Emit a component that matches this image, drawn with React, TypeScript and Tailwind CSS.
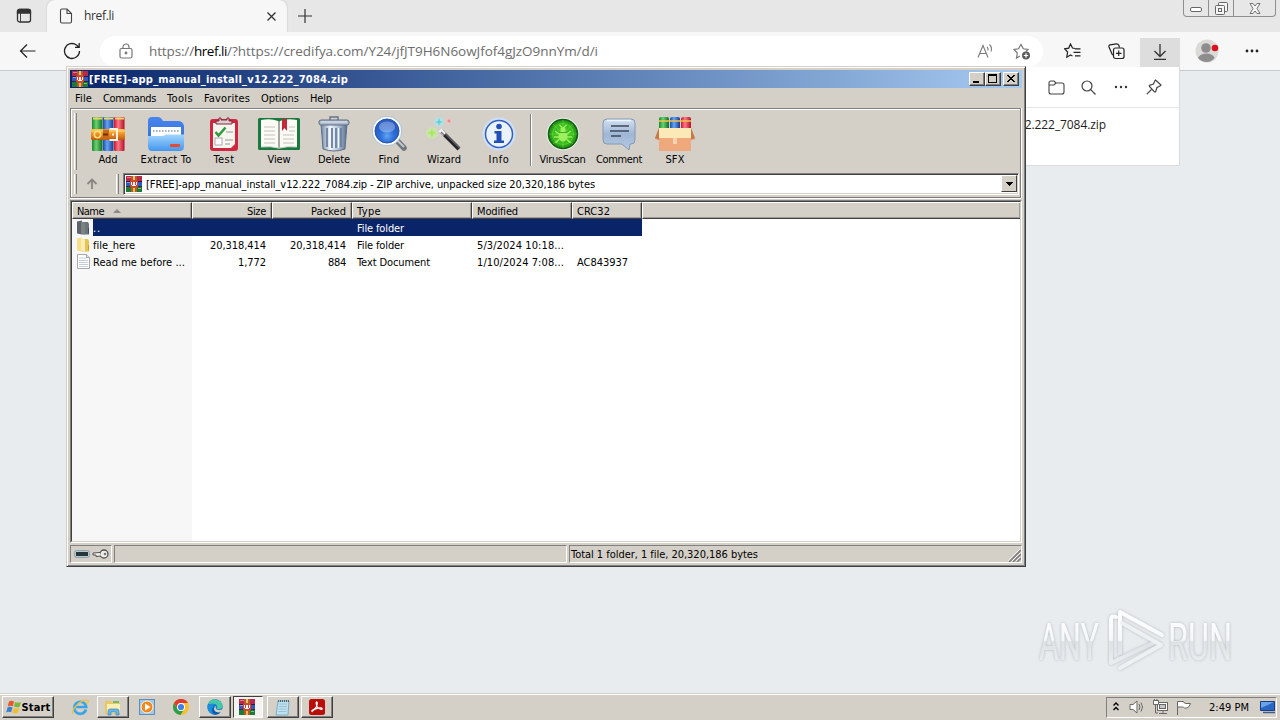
import { useLayoutEffect, useRef, useState, type ReactNode } from "react";

/* Text whose tracking is computed so that it spans exactly `w` pixels. */
function Fit({ w, className = "", children }: { w: number; className?: string; children: string }) {
  const ref = useRef<HTMLSpanElement>(null);
  const [ls, setLs] = useState(0);
  useLayoutEffect(() => {
    const el = ref.current;
    if (!el) return;
    el.style.letterSpacing = "0px";
    setLs((w - el.getBoundingClientRect().width) / children.length);
  }, [w, children]);
  return (
    <span ref={ref} className={`inline-block whitespace-pre ${className}`} style={{ letterSpacing: `${ls}px` }}>
      {children}
    </span>
  );
}

const ui = "font-['DejaVu_Sans_Condensed','DejaVu_Sans',sans-serif] [font-stretch:condensed] text-[11px] leading-[16px] text-black [&_span]:pt-[2px]";
const segoe = "font-['Open_Sans','Noto_Sans',sans-serif]";

function RarIcon({ className = "" }: { className?: string }) {
  return (
    <svg className={`shrink-0 ${className}`} viewBox="0 0 16 16" shapeRendering="crispEdges">
      <rect width="16" height="16" fill="#46202c" />
      <rect x="0" y="0" width="16" height="5" fill="#b52a4c" />
      <rect x="1" y="1" width="4" height="1" fill="#ec7690" />
      <rect x="0" y="5" width="16" height="1" fill="#3a1a2c" />
      <rect x="0" y="6" width="16" height="4" fill="#2c58c8" />
      <rect x="1" y="6" width="3" height="1" fill="#7fa3ee" />
      <rect x="0" y="11" width="16" height="5" fill="#1d7a3a" />
      <rect x="12" y="12" width="3" height="1" fill="#6dcc6a" />
      <rect x="5" y="0" width="6" height="16" fill="#b65b25" />
      <rect x="7" y="0" width="2" height="4" fill="#f0c46c" />
      <rect x="7" y="12" width="2" height="4" fill="#f0b850" />
      <rect x="4" y="5" width="8" height="6" fill="#d8402f" />
      <path d="M5 6v3h1v1h4V9h1V6h-1v3H9V6H7v3H6V6z" fill="#fff" />
    </svg>
  );
}

function AddIcon() {
  return (
    <svg width="36" height="36" viewBox="0 0 36 36">
      <defs>
        <linearGradient id="g1"><stop stopColor="#138a2b" /><stop offset=".4" stopColor="#6fd070" /><stop offset="1" stopColor="#0b6f22" /></linearGradient>
        <linearGradient id="b1"><stop stopColor="#1c49b4" /><stop offset=".4" stopColor="#67a5f0" /><stop offset="1" stopColor="#163a94" /></linearGradient>
        <linearGradient id="r1"><stop stopColor="#c9152c" /><stop offset=".4" stopColor="#ff7a86" /><stop offset="1" stopColor="#b30d24" /></linearGradient>
        <linearGradient id="o1" x2="0" y2="1"><stop stopColor="#ffc44a" /><stop offset=".5" stopColor="#ee8c24" /><stop offset="1" stopColor="#b85a0c" /></linearGradient>
      </defs>
      <rect x="2" y="1" width="10.5" height="34" rx="1" fill="url(#g1)" />
      <rect x="13" y="1" width="10.5" height="34" rx="1" fill="url(#b1)" />
      <rect x="24" y="1" width="10.5" height="34" rx="1" fill="url(#r1)" />
      <path d="M3 2.500h9M14 2.500h9M25 2.500h9" stroke="#f0d36a" strokeWidth="2" />
      <rect x="1" y="13" width="34" height="11" rx="1.500" fill="url(#o1)" />
      <path d="M1 15h34" stroke="#ffe08a" strokeOpacity=".8" />
      <circle cx="7.500" cy="18.500" r="3.200" fill="none" stroke="#ffe27a" strokeWidth="1.600" />
      <rect x="13" y="13.500" width="6" height="10" fill="#c86a18" />
      <path d="M13 18.500h5" stroke="#6a3208" strokeWidth="2" />
      <path d="M19.500 13h7.500v11h-7.500M22 18.500h2" fill="none" stroke="#fff4e4" strokeWidth="2" />
    </svg>
  );
}
function ExtractIcon() {
  return (
    <svg width="38" height="36" viewBox="0 0 38 36">
      <defs>
        <linearGradient id="f1" x2="0" y2="1"><stop stopColor="#a2d5fd" /><stop offset="1" stopColor="#4396ee" /></linearGradient>
        <linearGradient id="f2" x2="0" y2="1"><stop stopColor="#4a85ec" /><stop offset="1" stopColor="#2f6fdc" /></linearGradient>
      </defs>
      <path d="M1 5q0-4 4-4h6q3 0 5 4h15q5 0 6 5v16H1z" fill="url(#f2)" />
      <rect x="4" y="11" width="30" height="12" fill="#fff" />
      <path d="M6 15h27" stroke="#9fb0c8" strokeWidth="2" strokeDasharray="1.500 1.500" />
      <path d="M1 20h14q2 0 4-1.500h18v12q0 4.500-4.500 4.500h-27Q1 35 1 30.500z" fill="url(#f1)" />
      <rect x="23" y="28" width="10" height="3" rx="1" fill="#e24b32" />
    </svg>
  );
}
function TestIcon() {
  return (
    <svg width="30" height="36" viewBox="0 0 30 36">
      <rect x="1" y="3" width="28" height="32" rx="3" fill="#cf2740" />
      <path d="M4 7h22v21l-4 4H4z" fill="#f7f5f0" />
      <path d="M7 8V5h3V2h2v2h6V2h2v3h3v3z" fill="#d7d3d5" stroke="#8c2335" />
      <path d="M6.500 16l3 3.500 7-8" fill="none" stroke="#2f9a3c" strokeWidth="2.500" />
      <rect x="6" y="22" width="7" height="7" fill="#fff" stroke="#aaa" />
      <path d="M17 16h7M16 24h8M16 28h5" stroke="#9a9a9a" strokeWidth="1.200" />
    </svg>
  );
}
function ViewIcon() {
  return (
    <svg width="44" height="36" viewBox="0 0 44 36">
      <rect x="1" y="2" width="42" height="32" rx="1.500" fill="#19793f" />
      <path d="M4 4q10-2 17 1l1 1 1-1q7-3 17-1v27q-10-1-17 1h-2q-7-2-17-1z" fill="#fbfaf5" />
      <path d="M22 5v28" stroke="#8d8d84" strokeWidth="1.500" />
      <path d="M7 11h11M7 15h11M7 19h11M7 23h11M7 27h11M26 19h11M26 23h11M26 27h11M32 11h6M32 15h6" stroke="#c3c2bb" />
      <path d="M25 3h5v12l-2.500-3-2.500 3z" fill="#c5283a" />
      <path d="M4 31q10-1 17 1h2q7-2 17-1" stroke="#cfcfc4" fill="none" />
    </svg>
  );
}
function DeleteIcon() {
  return (
    <svg width="32" height="36" viewBox="0 0 32 36">
      <defs><linearGradient id="t1"><stop stopColor="#6f88a8" /><stop offset=".35" stopColor="#f0f5fa" /><stop offset=".7" stopColor="#a9bad0" /><stop offset="1" stopColor="#566d8d" /></linearGradient></defs>
      <path d="M12 4V1h8v3" fill="none" stroke="#66748a" strokeWidth="1.400" />
      <path d="M3 8h26l-2 25q-11 4-22 0z" fill="url(#t1)" stroke="#5d6f8a" />
      <path d="M9 12v19M14 12v20M18 12v20M23 12v19" stroke="#6b80a0" strokeWidth="1.800" />
      <path d="M11.500 12v20M16 12v20M20.500 12v20" stroke="#f2f7fc" />
      <rect x="1" y="4" width="30" height="5" rx="2" fill="#aab8cb" stroke="#5e6c82" />
      <path d="M3 6h26" stroke="#e8eef5" />
    </svg>
  );
}
function FindIcon() {
  return (
    <svg width="36" height="36" viewBox="0 0 36 36">
      <defs><radialGradient id="m1" cx=".5" cy=".7"><stop stopColor="#5fa6f2" /><stop offset=".55" stopColor="#2f70da" /><stop offset="1" stopColor="#2a5ec4" /></radialGradient></defs>
      <path d="M26 24.500l7 7.500" stroke="#70767e" strokeWidth="5.500" strokeLinecap="round" />
      <path d="M26 24l7 7" stroke="#c3c8cf" strokeWidth="2" />
      <circle cx="16" cy="15" r="14.800" fill="#f6faff" stroke="#9fb4cd" strokeWidth=".8" />
      <circle cx="16" cy="15" r="12" fill="url(#m1)" stroke="#27539f" />
      <ellipse cx="16" cy="11" rx="8" ry="5.500" fill="#fff" opacity=".3" />
    </svg>
  );
}
function WizardIcon() {
  return (
    <svg width="38" height="36" viewBox="0 0 38 36">
      <circle cx="7" cy="17" r="6" fill="#c5ee9b" opacity=".6" />
      <circle cx="14" cy="6" r="5" fill="#a8e8ee" opacity=".6" />
      <circle cx="24" cy="5" r="3" fill="#f5bfc0" opacity=".6" />
      <path d="M7 12.500l1.200 3.300L11.500 17l-3.300 1.200L7 21.500l-1.200-3.300L2.500 17l3.300-1.200z" fill="#a4ea5c" />
      <path d="M14 2l1 3 3 1-3 1-1 3-1-3-3-1 3-1z" fill="#5ad3df" />
      <path d="M24 3l.7 1.300L26 5l-1.300.7L24 7l-.7-1.300L22 5l1.300-.7z" fill="#f07f84" />
      <path d="M16 15l18 18" stroke="#26262a" strokeWidth="4" />
      <path d="M17 14.500l17.500 17.500" stroke="#8c8c92" strokeWidth="1" />
      <path d="M15 14l4.500 4.500" stroke="#f1f1f3" strokeWidth="4" />
      <path d="M16 16l3 3" stroke="#77777d" strokeWidth="1.500" />
    </svg>
  );
}
function InfoIcon() {
  return (
    <svg width="34" height="36" viewBox="0 0 34 36">
      <circle cx="17" cy="18" r="16.500" fill="#cfdef7" />
      <circle cx="17" cy="18" r="13.500" fill="#eaf2fd" stroke="#3160bf" strokeWidth="1.500" />
      <circle cx="17" cy="10.500" r="2.800" fill="#2250b5" />
      <path d="M12.500 15h7v9.500h2.500V27H12v-2.500h2.500V17.500h-2z" fill="#2250b5" />
    </svg>
  );
}
function VirusIcon() {
  return (
    <svg width="34" height="36" viewBox="0 0 34 36">
      <defs><radialGradient id="v1"><stop stopColor="#57c832" /><stop offset=".7" stopColor="#34b91a" /><stop offset="1" stopColor="#1f8a14" /></radialGradient></defs>
      <circle cx="17" cy="18" r="16.300" fill="#e9f2e5" />
      <circle cx="17" cy="18" r="14.500" fill="url(#v1)" stroke="#155d18" strokeWidth="1.600" />
      <path d="M17 4v28M3 18h28M7 8l20 20M27 8L7 28" stroke="#8ff060" strokeWidth=".7" opacity=".5" />
      <circle cx="17" cy="18" r="10.500" fill="none" stroke="#8ff060" strokeWidth=".6" opacity=".6" />
      <ellipse cx="17" cy="20" rx="4.500" ry="5.500" fill="#9cf05e" />
      <circle cx="17" cy="13.500" r="2.600" fill="#9cf05e" />
      <path d="M13 18l-4-3M21 18l4-3M13 21H8M21 21h5M13.500 23l-4 4M20.500 23l4 4M16 11.500L13.500 9M18 11.500L20.500 9" stroke="#9cf05e" strokeWidth="1.300" />
      <path d="M13 16.500h8" stroke="#2b9a1c" strokeWidth=".8" />
    </svg>
  );
}
function CommentIcon() {
  return (
    <svg width="34" height="36" viewBox="0 0 34 36">
      <defs><linearGradient id="c1" x2="0" y2="1"><stop stopColor="#d3e1f2" /><stop offset=".5" stopColor="#9fb6d4" /><stop offset="1" stopColor="#b7cae3" /></linearGradient></defs>
      <path d="M5 3h24a4 4 0 0 1 4 4v17a4 4 0 0 1-4 4h-1l-1 6-7-6H5a4 4 0 0 1-4-4V7a4 4 0 0 1 4-4z" fill="url(#c1)" stroke="#8399b6" />
      <path d="M5 4.500h24" stroke="#f1f6fc" strokeWidth="1.400" />
      <path d="M9 10h18M8 15h19M9 20h10" stroke="#3c4a5e" strokeWidth="1.600" />
    </svg>
  );
}
function SfxIcon() {
  return (
    <svg width="42" height="36" viewBox="0 0 42 36">
      <rect x="5" y="1" width="10" height="14" rx="2" fill="url(#g1)" />
      <rect x="16" y="1" width="10" height="14" rx="2" fill="url(#b1)" />
      <rect x="27" y="1" width="10" height="14" rx="2" fill="url(#r1)" />
      <path d="M5 5h32" stroke="#f0c64e" strokeWidth="1.500" />
      <path d="M5 12h32l4 11-4 1v11H5V24l-4-1z" fill="#d98b5c" />
      <path d="M5 12h32v10H5z" fill="#fbeab8" />
      <path d="M5 22h32v13H5z" fill="#efa87c" />
      <path d="M5 12v11l-4-1zM37 12v11l4-1z" fill="#c47a4c" />
      <path d="M19 22h4v6h-4z" fill="#f8d3b2" />
    </svg>
  );
}

function ToolButton({ icon, label, w, className }: { icon: ReactNode; label: string; w: number; className: string }) {
  return (
    <div className={`flex shrink-0 flex-col items-center ${className}`}>
      <div className="-mb-[2px] flex h-[36px] items-center">{icon}</div>
      <Fit w={w}>{label}</Fit>
    </div>
  );
}

const Grip = ({ className }: { className: string }) => (
  <div className={`w-[3px] shrink-0 border-r border-l border-r-[#808080] border-l-white bg-[#d4d0c8] ${className}`} />
);

function CaptionButton({ children, className = "" }: { children: ReactNode; className?: string }) {
  return (
    <div className={`flex h-[14px] w-4 items-center justify-center border border-t-white border-r-[#404040] border-b-[#404040] border-l-white bg-[#d4d0c8] shadow-[inset_-1px_-1px_0_#808080] ${className}`}>
      <svg width="12" height="10" viewBox="0 0 12 10" shapeRendering="crispEdges">{children}</svg>
    </div>
  );
}

function HeadCell({ children, className }: { children?: ReactNode; className: string }) {
  return (
    <div className={`flex h-[17px] shrink-0 items-center border border-t-white border-r-[#404040] border-b-[#404040] border-l-white bg-[#d4d0c8] pr-[5px] pl-[4px] shadow-[inset_-1px_-1px_0_#a09c95] ${className}`}>
      {children}
    </div>
  );
}

function FolderIcon({ dark = false }: { dark?: boolean }) {
  return (
    <svg width="16" height="16" viewBox="0 0 16 16" className="shrink-0">
      <path d="M1 1.500l5-1v14l-5-1z" fill={dark ? "#5c6468" : "#f5df8c"} />
      <path d="M6 2h6l1 2v10.500H6z" fill={dark ? "#6b7478" : "#e6c456"} />
      <path d="M5 1.500l4 1v12l-4-1z" fill={dark ? "#7b8284" : "#fbeeb4"} />
      <path d="M12 8h1v5l-1 1z" fill={dark ? "#3c4870" : "#c99e2d"} />
    </svg>
  );
}
function DocIcon() {
  return (
    <svg width="16" height="16" viewBox="0 0 16 16" className="shrink-0">
      <path d="M1.500.5h9l3 3v11h-12z" fill="#fff" stroke="#a3a9ae" />
      <path d="M3 4h8M3 6.500h9M3 8.500h9M3 10.500h9M3 12.500h9" stroke="#b8c3cd" strokeWidth=".8" />
      <path d="M10.500.5v3h3" fill="#dde6ee" stroke="#a3a9ae" />
    </svg>
  );
}

type Row = { icon: ReactNode; name: [string, number]; size?: [string, number]; packed?: [string, number]; type: [string, number]; mod?: [string, number]; crc?: [string, number]; sel?: boolean };
const rows: Row[] = [
  { icon: <FolderIcon dark />, name: ["..", 8], type: ["File folder", 47], sel: true },
  { icon: <FolderIcon />, name: ["file_here", 42], size: ["20,318,414", 56], packed: ["20,318,414", 56], type: ["File folder", 47], mod: ["5/3/2024 10:18...", 87] },
  { icon: <DocIcon />, name: ["Read me before ...", 92], size: ["1,772", 28], packed: ["884", 18], type: ["Text Document", 73], mod: ["1/10/2024 7:08...", 87], crc: ["AC843937", 51] },
];
const cell = (c?: [string, number]) => (c ? <Fit w={c[1]}>{c[0]}</Fit> : null);

function Window() {
  return (
    <div className={`absolute top-[66px] left-[66px] flex h-[501px] w-[960px] flex-col border border-t-[#d4d0c8] border-r-[#404040] border-b-[#404040] border-l-[#d4d0c8] bg-[#d4d0c8] p-[3px] shadow-[inset_1px_1px_0_#fff,inset_-1px_-1px_0_#808080] ${ui}`}>
      <div className="flex h-[18px] shrink-0 items-center bg-linear-to-r from-[#0a246a] to-[#a6caf0] pr-[3px] pl-[2px]">
        <RarIcon className="h-4 w-4" />
        <Fit w={259} className="ml-[1px] font-bold text-white">[FREE]-app_manual_install_v12.222_7084.zip</Fit>
        <div className="ml-auto flex">
          <CaptionButton><path d="M2 7h6v2H2z" /></CaptionButton>
          <CaptionButton><path d="M1 0h9v9H1zM2 2v6h7V2z" fillRule="evenodd" /></CaptionButton>
          <CaptionButton className="ml-[2px]"><path d="M2 1h2v1h1v1h2V2h1V1h2v1H9v1H8v1H7v1h1v1h1v1h1v1H8V7H7V6H5v1H4v1H2V7h1V6h1V5h1V4H4V3H3V2H2z" /></CaptionButton>
        </div>
      </div>
      <div className="flex h-5 shrink-0 items-center pl-[5px]">
        <Fit w={17}>File</Fit>
        <Fit w={53} className="ml-[11px]">Commands</Fit>
        <Fit w={26} className="ml-[11px]">Tools</Fit>
        <Fit w={46} className="ml-[11px]">Favorites</Fit>
        <Fit w={38} className="ml-[11px]">Options</Fit>
        <Fit w={22} className="ml-[11px]">Help</Fit>
      </div>
      <div className="flex h-[90px] w-[951px] shrink-0 flex-col border border-[#808080] shadow-[inset_1px_1px_0_#fff,0_1px_0_#fff,1px_0_0_#fff]">
        <div className="flex h-[63px] pt-[7px] pl-[3px]">
          <Grip className="mt-[-3px] h-[57px]" />
          <div className="ml-[3px] flex">
            <ToolButton className="w-14" icon={<AddIcon />} label="Add" w={19} />
            <ToolButton className="w-15" icon={<ExtractIcon />} label="Extract To" w={51} />
            <ToolButton className="w-14" icon={<TestIcon />} label="Test" w={21} />
            <ToolButton className="w-[54px]" icon={<ViewIcon />} label="View" w={23} />
            <ToolButton className="w-14" icon={<DeleteIcon />} label="Delete" w={32} />
            <ToolButton className="w-[54px]" icon={<FindIcon />} label="Find" w={21} />
            <ToolButton className="w-14" icon={<WizardIcon />} label="Wizard" w={34} />
            <ToolButton className="w-[54px]" icon={<InfoIcon />} label="Info" w={21} />
            <div className="mt-[-2px] mr-[3px] ml-[4px] h-[52px] w-[2px] border-r border-l border-r-white border-l-[#808080]" />
            <ToolButton className="w-[55px]" icon={<VirusIcon />} label="VirusScan" w={46} />
            <ToolButton className="w-[58px]" icon={<CommentIcon />} label="Comment" w={46} />
            <ToolButton className="w-[54px]" icon={<SfxIcon />} label="SFX" w={19} />
          </div>
        </div>
        <div className="flex h-[22px] items-center pt-px pl-[3px]">
          <Grip className="h-[20px]" />
          <div className="flex w-[39px] justify-center pr-[10px]">
            <svg width="12" height="12" viewBox="0 0 12 12" fill="none" stroke="#8a867f" strokeWidth="1.800"><path d="M6 11V1.500M1.500 6L6 1.500 10.500 6" /></svg>
          </div>
          <Grip className="h-[20px]" />
          <div className="ml-[4px] flex h-[22px] w-[896px] items-center border border-t-[#808080] border-r-white border-b-white border-l-[#808080] bg-white p-px pl-[2px] shadow-[inset_1px_1px_0_#404040,inset_-1px_-1px_0_#d4d0c8]">
            <RarIcon className="h-4 w-4" />
            <Fit w={449} className="ml-[4px]">[FREE]-app_manual_install_v12.222_7084.zip - ZIP archive, unpacked size 20,320,186 bytes</Fit>
            <div className="ml-auto flex h-[17px] w-4 items-center justify-center border border-t-white border-r-[#404040] border-b-[#404040] border-l-white bg-[#d4d0c8]">
              <svg width="7" height="4" viewBox="0 0 7 4" shapeRendering="crispEdges"><path d="M0 0h7v1H6v1H5v1H4v1H3V3H2V2H1V1H0z" /></svg>
            </div>
          </div>
        </div>
      </div>
      <div className="mt-[2px] flex h-[343px] shrink-0 flex-col border border-t-[#808080] border-r-white border-b-white border-l-[#808080]">
        <div className="flex grow flex-col border border-t-[#404040] border-r-[#d4d0c8] border-b-[#d4d0c8] border-l-[#404040] bg-white">
          <div className="flex shrink-0">
            <HeadCell className="w-[120px]">
              <Fit w={27}>Name</Fit>
              <svg width="8" height="4" viewBox="0 0 8 4" className="ml-[9px]"><path d="M0 4l4-4 4 4z" fill="#8d8a84" /></svg>
            </HeadCell>
            <HeadCell className="w-20 justify-end"><Fit w={19}>Size</Fit></HeadCell>
            <HeadCell className="w-20 justify-end"><Fit w={35}>Packed</Fit></HeadCell>
            <HeadCell className="w-[120px]"><Fit w={24}>Type</Fit></HeadCell>
            <HeadCell className="w-[100px]"><Fit w={41}>Modified</Fit></HeadCell>
            <HeadCell className="w-[70px]"><Fit w={33}>CRC32</Fit></HeadCell>
            <HeadCell className="w-[378px] border-r-0" />
          </div>
          <div className="flex grow flex-col bg-linear-to-r from-[#f7f7f7] from-[120px] to-white to-[120px]">
            {rows.map((r) => (
              <div key={r.name[0]} className={`flex h-[17px] w-[570px] items-center ${r.sel ? "text-white" : ""}`}>
                <div className="flex w-[21px] shrink-0 justify-end pr-px pl-1">{r.icon}</div>
                <div className={`flex h-[17px] grow items-center ${r.sel ? "bg-[#0a246a]" : ""}`}>
                  <div className="flex w-[99px] shrink-0">{cell(r.name)}</div>
                  <div className="flex w-20 shrink-0 justify-end pr-[6px]">{cell(r.size)}</div>
                  <div className="flex w-20 shrink-0 justify-end pr-[6px]">{cell(r.packed)}</div>
                  <div className="flex w-[120px] shrink-0 pl-[5px]">{cell(r.type)}</div>
                  <div className="flex w-[100px] shrink-0 pl-[5px]">{cell(r.mod)}</div>
                  <div className="flex w-[70px] shrink-0 pl-[5px]">{cell(r.crc)}</div>
                </div>
              </div>
            ))}
          </div>
        </div>
      </div>
      <div className="mt-[2px] flex h-[18px] shrink-0 gap-[2px]">
        <div className="flex w-[42px] items-center border border-t-[#808080] border-r-white border-b-white border-l-[#808080] pl-[3px]">
          <svg width="36" height="12" viewBox="0 0 36 12">
            <rect x=".5" y="2.500" width="15" height="7" rx="2" fill="#b7c9cd" stroke="#8fa4a8" />
            <rect x="2" y="4" width="12" height="4" fill="#26363a" />
            <circle cx="30" cy="6" r="4" fill="#eee" stroke="#55524d" strokeWidth="1.300" />
            <circle cx="31" cy="6" r="1.300" fill="#777" />
            <path d="M26 4.500l-7 .5v2h3v1.500l5-.500" fill="#eee" stroke="#55524d" />
          </svg>
        </div>
        <div className="w-[453px] border border-t-[#808080] border-r-white border-b-white border-l-[#808080]" />
        <div className="flex grow items-center justify-between border border-t-[#808080] border-r-white border-b-white border-l-[#808080] pl-[1px]">
          <Fit w={187}>Total 1 folder, 1 file, 20,320,186 bytes</Fit>
          <svg width="13" height="13" viewBox="0 0 13 13" className="self-end"><path d="M1 13L13 1M5 13l8-8M9 13l4-4" stroke="#808080" strokeWidth="1.600" /><path d="M0 12L12 0M4 12l8-8M8 12l4-4" stroke="#fff" strokeWidth=".8" /></svg>
        </div>
      </div>
    </div>
  );
}

function Browser() {
  return (
    <div className={`flex shrink-0 flex-col ${segoe}`}>
      <div className="flex h-8 bg-[#e7e7e7]">
        <div className="flex w-[47px] items-center pl-[16px]">
          <svg width="16" height="16" viewBox="0 0 16 16" fill="none" stroke="#333" strokeWidth="1.300"><rect x="1.500" y="1.500" width="13" height="12.500" rx="2" /><path d="M1.500 3.500q0-2 2-2h9q2 0 2 2V5h-13z" fill="#333" /><path d="M4.500 5v9" strokeWidth=".9" /></svg>
        </div>
        <div className="flex w-[240px] items-center rounded-t-lg bg-[#f7f7f7] pl-3 shadow-[0_0_2px_#bbb]">
          <svg width="14" height="16" viewBox="0 0 14 16" fill="none" stroke="#444" strokeWidth="1.100"><path d="M1.500 2.500q0-1.500 1.500-1.500h5l4.500 4.500V13.500q0 1.500-1.500 1.500H3q-1.500 0-1.500-1.500zM8 1v4.500h4.500" /></svg>
          <Fit w={30} className="ml-[11px] text-[12px] leading-4 text-[#333]">href.li</Fit>
          <svg width="9" height="9" viewBox="0 0 9 9" className="ml-[153px]" stroke="#333" strokeWidth="1.300"><path d="M.5.5l8 8M8.500.5l-8 8" /></svg>
        </div>
        <div className="flex items-center pl-[11px]">
          <svg width="14" height="14" viewBox="0 0 14 14" stroke="#333" strokeWidth="1.200"><path d="M7 0v14M0 7h14" /></svg>
        </div>
        <div className="mr-[4px] ml-auto flex h-[17px] rounded-b-[4px] border border-t-0 border-[#8f8f8f] text-[#777]">
          <div className="flex w-[25px] items-center justify-center border-r border-[#8f8f8f] pt-[3px]">
            <svg width="12" height="5" viewBox="0 0 12 5" fill="#fff" stroke="#666"><rect x=".5" y=".5" width="11" height="4" rx="1.500" /></svg>
          </div>
          <div className="flex w-[25px] items-center justify-center border-r border-[#8f8f8f]">
            <svg width="13" height="13" viewBox="0 0 13 13" fill="#f4f4f4" stroke="#666"><rect x="3.500" y=".5" width="9" height="9" rx="1" /><rect x=".5" y="3.500" width="9" height="9" rx="1" /><rect x="3.500" y="6.500" width="3" height="3" /></svg>
          </div>
          <div className="flex w-[41px] items-center justify-center">
            <svg width="12" height="11" viewBox="0 0 12 11" fill="#f4f4f4" stroke="#666" strokeWidth=".9"><path d="M1 .5h3l2 2.500 2-2.500h3L8 5.500l3 5H8L6 8l-2 2.500H1l3-5z" /></svg>
          </div>
        </div>
      </div>
      <div className="flex h-[39px] items-center border-b border-[#c9c9c9] bg-[#f7f7f7]">
        <svg width="17" height="14" viewBox="0 0 17 14" className="ml-[19px]" fill="none" stroke="#222" strokeWidth="1.200"><path d="M16.500 7H1.500M8 .5L1.500 7 8 13.500" /></svg>
        <svg width="18" height="18" viewBox="0 0 18 18" className="ml-[27px]" fill="none" stroke="#222" strokeWidth="1.300"><path d="M16.500 9A7.500 7.500 0 1 1 13.500 3l2.500 2.200M16.200 1v4.300H12" /></svg>
        <div className="ml-[19px] flex h-[31px] w-[943px] items-center rounded-full bg-white pl-[19px]">
          <svg width="14" height="16" viewBox="0 0 14 16" fill="none" stroke="#777" strokeWidth="1.200"><rect x="1" y="5.500" width="12" height="9.500" rx="1.500" /><path d="M4 5.500V4a3 3 0 0 1 6 0v1.500" /><circle cx="7" cy="10" r=".8" fill="#777" /></svg>
          <div className="ml-[16px] flex text-[13.5px] leading-5 text-[#6d6d6d]">
            <Fit w={45}>https://</Fit>
            <Fit w={33} className="text-black">href.li</Fit>
            <Fit w={371}>/?https://credifya.com/Y24/jfJT9H6N6owJfof4gJzO9nnYm/d/i</Fit>
          </div>
          <svg width="17" height="16" viewBox="0 0 17 16" className="ml-[379px]" fill="none" stroke="#7a7a7a" strokeWidth="1.100"><path d="M1 14.500L6 2.500l5 12M2.800 10.500h6.400M10 4q1.500 1.300 1 3.500M12.500 1.500q3 3 1.500 7" /></svg>
          <svg width="18" height="17" viewBox="0 0 18 17" className="ml-[19px]" fill="none" stroke="#777" strokeWidth="1.200"><path d="M7 13l-3.500 2 .8-5L1 6.500l4.500-.7L8 1.500l2.300 4.300 4.700.7-2 2" /><circle cx="13" cy="12.500" r="4" fill="#5c5c5c" stroke="none" /><path d="M10.800 12.500h4.400M13 10.300v4.400" stroke="#fff" /></svg>
        </div>
        <svg width="17" height="16" viewBox="0 0 17 16" className="ml-[21px]" fill="none" stroke="#222" strokeWidth="1.200"><path d="M11 5.500L8.500 5 6.500 1 4.700 5.100.7 5.800 3.600 9l-.8 5.200L6.500 12l2 1M11 5.800h5.500M9.500 9.300h7M11 12.800h5.500" /></svg>
        <svg width="17" height="17" viewBox="0 0 17 17" className="ml-[27px]" fill="none" stroke="#222" strokeWidth="1.200"><path d="M5 12q-1-.5-1.300-1.700L1 4q-.4-1.600 1-2.200L8.500.8Q10 .7 10.700 2l.8 2.500" /><rect x="5.500" y="5" width="10.500" height="10.500" rx="2" fill="#f7f7f7" /><path d="M10.700 7.500v5.500M8 10.300h5.500" /></svg>
        <div className="ml-[15px] flex h-8 w-10 items-center justify-center self-end bg-[#dddddd] pb-[4px]">
          <svg width="12" height="16" viewBox="0 0 12 16" fill="none" stroke="#333" strokeWidth="1.300"><path d="M6 0v12M.5 7L6 12.500 11.500 7M0 15.300h12" /></svg>
        </div>
        <svg width="24" height="24" viewBox="0 0 24 24" className="ml-[15px]"><circle cx="12" cy="12" r="11.500" fill="#dcdad7" /><circle cx="11" cy="9" r="4.800" fill="#8d8d8d" /><path d="M3 19q2-4.500 8.500-4.500T19.500 19q-3 4-8 4T3 19z" fill="#8d8d8d" /><circle cx="20" cy="9" r="3.300" fill="#d8121f" /></svg>
        <svg width="14" height="4" viewBox="0 0 14 4" className="ml-[26px]" fill="#222"><circle cx="2" cy="2" r="1.400" /><circle cx="7" cy="2" r="1.400" /><circle cx="12" cy="2" r="1.400" /></svg>
      </div>
    </div>
  );
}

function Downloads() {
  return (
    <div className={`absolute top-[67px] left-[1000px] flex h-[99px] w-[180px] flex-col border border-t-0 border-[#d9dbdd] bg-white ${segoe}`}>
      <div className="flex h-[41px] items-center border-b border-[#e6e6e6] pl-[47px]">
        <svg width="17" height="15" viewBox="0 0 17 15" fill="none" stroke="#444" strokeWidth="1.100"><path d="M1 3q0-2 2-2h3l2 2h6q2 0 2 2v7q0 2-2 2H3q-2 0-2-2zM1 5h5l2-2" /></svg>
        <svg width="15" height="15" viewBox="0 0 15 15" className="ml-[16px]" fill="none" stroke="#444" strokeWidth="1.200"><circle cx="6" cy="6" r="5" /><path d="M9.700 9.700L14.500 14.500" /></svg>
        <svg width="14" height="4" viewBox="0 0 14 4" className="ml-[18px]" fill="#333"><circle cx="2" cy="2" r="1.200" /><circle cx="7" cy="2" r="1.200" /><circle cx="12" cy="2" r="1.200" /></svg>
        <svg width="16" height="16" viewBox="0 0 16 16" className="ml-[18px]" fill="none" stroke="#444" strokeWidth="1.200"><path d="M9.500 1l5.500 5-1 1-3 1.500-1.500 4.500h-1L3.500 7.500 3.300 6.500 7.500 5 9 1.500zM6 10L.8 15.200" /></svg>
      </div>
      <div className="flex justify-end pt-[7px] pr-[73px]">
        <Fit w={94} className="text-[12px] leading-5 text-[#222]">v12.222_7084.zip</Fit>
      </div>
    </div>
  );
}

function Watermark() {
  return (
    <svg width="212" height="82" viewBox="-6 -6 212 82" className="absolute top-[600px] left-[1030px] overflow-visible">
      <defs>
        <linearGradient id="w" gradientUnits="userSpaceOnUse" x1="0" x2="0" y1="16" y2="54"><stop stopColor="#fafcfd" /><stop offset=".48" stopColor="#f5f7f8" /><stop offset=".52" stopColor="#dfe2e5" /><stop offset="1" stopColor="#e9ecee" /></linearGradient>
        <filter id="s" x="-10%" y="-20%" width="120%" height="140%"><feDropShadow dx="0" dy="0" stdDeviation="1.500" floodColor="#8d9398" floodOpacity=".6" /></filter>
      </defs>
      <g filter="url(#s)" fill="url(#w)">
        <text x="3" y="54" fontSize="52" fontFamily="Roboto, sans-serif" textLength="60" lengthAdjust="spacingAndGlyphs">ANY</text>
        <text x="132" y="54" fontSize="52" fontFamily="Roboto, sans-serif" textLength="64" lengthAdjust="spacingAndGlyphs">RUN</text>
        <g fill="none" stroke="url(#w)" strokeWidth="4" strokeLinejoin="round" strokeLinecap="round">
          <path d="M80 11q-5-2-5 3V57L119 36" />
          <path d="M84 47V6L126 29" />
          <path d="M84 62L125 39 86 17" stroke="#eef1f3" />
        </g>
      </g>
    </svg>
  );
}

function Task({ children, raised, pressed, className }: { children: ReactNode; raised?: boolean; pressed?: boolean; className: string }) {
  const edge = pressed
    ? "border border-t-[#404040] border-l-[#404040] border-r-white border-b-white bg-[#f4f2ee]"
    : raised
      ? "border border-t-white border-l-white border-r-[#404040] border-b-[#404040] shadow-[inset_-1px_-1px_0_#808080]"
      : "";
  return <div className={`flex h-[22px] shrink-0 items-center justify-center ${edge} ${className}`}>{children}</div>;
}

function Taskbar() {
  return (
    <div className={`flex h-[27px] shrink-0 items-center border-t border-[#d4d0c8] bg-[#d4d0c8] pl-[2px] shadow-[inset_0_1px_0_#fff] ${ui}`}>
      <Task raised className="w-[52px]">
        <svg width="16" height="16" viewBox="0 0 16 16"><path d="M3 2.500q2.500-1.500 5 0L6.800 7.200q-2.500-1.200-5 .2z" fill="#e8562c" /><path d="M9 3q2.500 1.300 6 0l-1.500 4.700q-3 1.200-5.500-.2z" fill="#7ab83a" /><path d="M1.500 8.600q2.500-1.500 5 0l-1.300 4.700q-2.300-1.300-5 .1z" fill="#3c7fd0" /><path d="M7.700 9q2.500 1.300 5.500.1l-1.300 4.700q-3 1.200-5.500-.2z" fill="#f4bd2c" /></svg>
        <Fit w={29} className="font-bold">Start</Fit>
      </Task>
      <Task className="ml-[11px] w-[30px]">
        <svg width="18" height="18" viewBox="0 0 18 18" fill="none"><path d="M15 11.500A6 6 0 1 1 15.200 9H5" stroke="#3ba4e6" strokeWidth="2.700" /><path d="M2 16q-2-3 4-9T17 2.500q1 1-1.500 3.500" stroke="#efc040" strokeWidth="1.300" /></svg>
      </Task>
      <Task raised className="ml-[2px] w-[32px]">
        <svg width="18" height="17" viewBox="0 0 18 17"><path d="M1 2h6l1 2h8v11H1z" fill="#e9c863" /><path d="M3 5h13v9H3z" fill="#fbefb4" /><path d="M4 16v-4q0-2 2-2h7q2 0 2 2v4h-3v-3H7v3z" fill="#69b4e6" stroke="#3f87bd" strokeWidth=".7" /><path d="M9 2h6v2H9z" fill="#6dbb6b" /></svg>
      </Task>
      <Task className="ml-[3px] w-[30px]">
        <svg width="16" height="16" viewBox="0 0 16 16"><rect x=".5" y=".5" width="15" height="15" fill="#9fc7ea" stroke="#5b8fc0" /><circle cx="8" cy="8" r="6" fill="#f18a1d" stroke="#fff3dd" /><path d="M6 4.500L11.500 8 6 11.500z" fill="#fff" /></svg>
      </Task>
      <Task className="ml-[4px] w-[30px]">
        <svg width="16" height="16" viewBox="0 0 16 16"><circle cx="8" cy="8" r="8" fill="#f6c12c" /><path d="M1 4.100A8 8 0 0 1 15 4H8a4 4 0 0 0-3.500 6z" fill="#dd3d31" /><path d="M1 4.100A8 8 0 0 0 7.500 16L11 10.500A4 4 0 0 1 4.500 10z" fill="#2f9d4e" /><circle cx="8" cy="8" r="4" fill="#fff" /><circle cx="8" cy="8" r="3.100" fill="#3f7fe8" /></svg>
      </Task>
      <Task raised className="ml-[3px] w-[32px]">
        <svg width="16" height="16" viewBox="0 0 16 16"><circle cx="8" cy="8" r="7.700" fill="#1673c7" /><path d="M1 5Q4-1 10 .7q6 2 5.600 7-1 3-4.600 2.500-2-.5-1-2Q10 4.500 6 5 3 5.300 1 5z" fill="#46c9a8" /><path d="M.7 6Q4 3.500 8 5q-3 2-2 5.500Q8 15 13 13q-2 3-6 2.700Q0 14 .7 6z" fill="#1b8fdf" /><path d="M9 7q-1.500 3 2.500 4 2.500.3 4.500-1.200v5L11 14Q7 13 7 9.500q.5-2.500 2-2.500z" fill="#d4d0c8" /><path d="M6.500 8q-.5 5 5 5.500 1.500 0 2.500-.8-2 3-6 2.800Q5 14 5 11q0-2 1.500-3z" fill="#0c59a8" /></svg>
      </Task>
      <Task pressed className="ml-[2px] w-[30px] pr-[2px]"><RarIcon className="h-4 w-4" /></Task>
      <Task raised className="ml-[4px] w-[32px]">
        <svg width="16" height="17" viewBox="0 0 16 17"><path d="M3 2h11l-1 14H1z" fill="#bfe0ee" stroke="#6ba1ba" strokeWidth=".8" /><path d="M4 5h8M4 7.500h8M3.500 10h8M3.500 12.500h8" stroke="#8fbdd1" strokeWidth=".8" /><path d="M3 2h11" stroke="#4c6470" strokeWidth="2" strokeDasharray="1 1" /></svg>
      </Task>
      <Task raised className="ml-[2px] w-[32px]">
        <svg width="16" height="16" viewBox="0 0 16 16"><rect width="16" height="16" rx="2.500" fill="#b80f0a" /><path d="M3 12.500q-.8-1 2-2.300Q8 8.500 8.300 4q-.5-2-1.200-.3Q7 7 9.500 9.200q3.500 2 3.700.6-.2-1.500-4.200-.6-4.500 1-6 3.300z" fill="none" stroke="#fff" strokeWidth="1.200" /></svg>
      </Task>
      <div className="mr-[3px] ml-auto flex h-[21px] w-[171px] items-center border border-t-[#808080] border-r-white border-b-white border-l-[#808080]">
        <svg width="6" height="9" viewBox="0 0 6 9" className="mb-[2px] ml-[6px]" fill="none" stroke="#000" strokeWidth="1.400"><path d="M.5 3.500L3 1l2.500 2.500M.5 8L3 5.500 5.500 8" /></svg>
        <svg width="16" height="14" viewBox="0 0 16 14" className="ml-[10px]" fill="#fff" stroke="#6b6965"><path d="M1 4.500h3L8 1v12L4 9.500H1z" /><path d="M10 4q2 3 0 6M12 2.500q3 4.500 0 9" fill="none" /></svg>
        <svg width="17" height="16" viewBox="0 0 17 16" className="ml-[7px]" fill="#fff" stroke="#6a6864"><rect x="5.500" y="3.500" width="10" height="8" /><rect x="7.500" y="5.500" width="6" height="4" fill="#c4c8ca" /><path d="M7 14.500h8M11 12v2M3.500 6v8H6" fill="none" /><path d="M1.500 1.500h5v4h-5zM2.500 0v2M5 0v2" /></svg>
        <svg width="16" height="15" viewBox="0 0 16 15" className="ml-[7px]" fill="#fff" stroke="#6a6864"><path d="M1.500 15V1.500h6q.5 2 2.500 2h4.500q-1 3.500-3.500 4.500H8.500q-1-1-2-1h-5" /></svg>
        <Fit w={40} className="ml-[17px]">2:49 PM</Fit>
        <svg width="16" height="14" viewBox="0 0 16 14" className="ml-[11px]"><path d="M.5 1.500h14v9h-14z" fill="#2a66c4" stroke="#163d85" /><path d="M1 2h13L1 8z" fill="#6ca4ea" /><path d="M3 12.500h12" stroke="#405d88" strokeWidth="1.500" /></svg>
      </div>
    </div>
  );
}

export default function App() {
  return (
    <div className="relative flex h-[720px] w-[1280px] flex-col overflow-hidden bg-[#e8ecef]">
      <Browser />
      <div className="grow" />
      <Taskbar />
      <Downloads />
      <Window />
      <Watermark />
    </div>
  );
}
